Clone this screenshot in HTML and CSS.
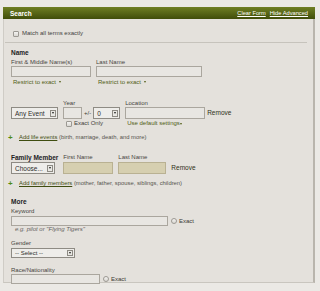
FILE: index.html
```html
<!DOCTYPE html>
<html lang="en">
<head>
  <meta charset="UTF-8">
  <title>Search</title>
  <link rel="stylesheet" href="styles.css">
</head>
<body>
  <section class="search">
    <div class="search_head">
      <h2>Search</h2>
      <div class="head_links"><a href="#">Clear Form</a><a href="#">Hide Advanced</a></div>
    </div>
    <div class="search_body">
      <div class="match"><span class="chk"></span>Match all terms exactly</div>

      <h3 class="heading name_head">Name</h3>
      <div class="row">
        <div class="col">
          <span class="lbl">First &amp; Middle Name(s)</span>
          <span class="input w80"></span>
          <a class="restrict" href="#">Restrict to exact <i class="caret"></i></a>
        </div>
        <div class="col">
          <span class="lbl">Last Name</span>
          <span class="input w106"></span>
          <a class="restrict" href="#">Restrict to exact <i class="caret"></i></a>
        </div>
      </div>

      <div class="row event_row">
        <div class="col">
          <span class="lbl">&nbsp;</span>
          <span class="select w47">Any Event<b class="drop"><i></i></b></span>
        </div>
        <div class="col year_col">
          <span class="lbl">Year</span>
          <span class="input w19 h12"></span>
          <span class="sub exact_only"><span class="chk"></span>Exact Only</span>
        </div>
        <div class="col">
          <span class="lbl">&nbsp;</span>
          <span class="pm">+/-</span>
        </div>
        <div class="col">
          <span class="lbl">&nbsp;</span>
          <span class="select w27">0<b class="drop"><i></i></b></span>
        </div>
        <div class="col loc_col">
          <span class="lbl">Location</span>
          <span class="input w80 h12"></span>
          <a class="sub restrict" href="#">Use default settings<i class="caret"></i></a>
        </div>
        <div class="col">
          <span class="lbl">&nbsp;</span>
          <span class="remove">Remove</span>
        </div>
      </div>

      <p class="add add_life"><span class="plus">+</span><a href="#">Add life events</a> (birth, marriage, death, and more)</p>

      <div class="row family_row">
        <div class="col">
          <h3 class="heading">Family Member</h3>
          <span class="select w44">Choose...<b class="drop"><i></i></b></span>
        </div>
        <div class="col">
          <span class="lbl">First Name</span>
          <span class="input tan w50"></span>
        </div>
        <div class="col">
          <span class="lbl">Last Name</span>
          <span class="input tan w48"></span>
        </div>
        <div class="col">
          <span class="lbl">&nbsp;</span>
          <span class="remove">Remove</span>
        </div>
      </div>

      <p class="add add_family"><span class="plus">+</span><a href="#">Add family members</a> (mother, father, spouse, siblings, children)</p>

      <h3 class="heading more_head">More</h3>
      <span class="lbl kw_lbl">Keyword</span>
      <div class="line">
        <span class="input w157 h10"></span><span class="chk round"></span><span class="exact">Exact</span>
      </div>
      <p class="hint">e.g. pilot or "Flying Tigers"</p>

      <span class="lbl gender_lbl">Gender</span>
      <span class="select w64 h10">-- Select --<b class="drop"><i></i></b></span>

      <span class="lbl race_lbl">Race/Nationality</span>
      <div class="line">
        <span class="input w89 h10"></span><span class="chk round"></span><span class="exact">Exact</span>
      </div>
    </div>
  </section>
</body>
</html>
```

FILE: styles.css
```css
html, body{  margin: 0;  padding: 0;  }
body{
  background: #ebe9e5;
  font-family: "Liberation Sans", Arial, sans-serif;  font-size: 6px;  color: #43413c;
  width: 320px;  height: 291px;  overflow: hidden;
}
h2, h3, p{  margin: 0;  padding: 0;  }
a{  color: inherit;  }

.search{  margin: 7px 5px 0 3px;  }

.search_head{
  height: 12px;  padding: 0 7px;  display: flex;  align-items: center;  justify-content: space-between;
  background: linear-gradient(#6f7f24, #404d0a);
}
.search_head h2{  font-size: 6.5px;  color: #fff;  font-weight: bold;  }
.head_links{  display: flex;  gap: 4px;  font-size: 5.7px;  }
.head_links a{  color: #fff;  }

.search_body{
  background: #e4e1dc;  border-left: 1px solid #cfccc6;  border-right: 2px solid #b9b5ad;  border-bottom: 1px solid #c9c6bf;
  padding: 0 6px 5px 7px;  height: 264px;  box-sizing: border-box;
}

.match{
  margin: 0 0 0 -6px;  padding: 11px 0 5px 8px;  line-height: 7px;  width: 302px;  box-sizing: border-box;
  border-bottom: 1px solid #c6c3bc;  display: flex;  align-items: center;  gap: 3px;
}

.chk{
  display: inline-block;  width: 4px;  height: 4px;  border: 1px solid #9c9993;  border-radius: 1px;
  background: linear-gradient(#f4f3f1, #d9d7d2);
}
.chk.round{  border-radius: 50%;  }

.heading{  font-size: 6.5px;  line-height: 7px;  color: #22211e;  font-weight: bold;  }
.name_head{  margin-top: 6px;  }

.row{  display: flex;  align-items: flex-start;  }
.col{  display: flex;  flex-direction: column;  align-items: flex-start;  white-space: nowrap;  flex-shrink: 0;  }
.year_col{  width: 19px;  }
.loc_col{  width: 80px;  }
.lbl{  display: block;  line-height: 7px;  color: #46443e;  }

.row:not(.event_row):not(.family_row){  margin-top: 3px;  gap: 5px;  }

.input{
  display: block;  height: 11px;  box-sizing: border-box;  border: 1px solid #aaa69e;  background: #e8e6e2;
}
.input.tan{  background: #d6cfb0;  border-color: #b9b192;  height: 12px;  }
.h12{  height: 12px;  }
.h10{  height: 10px;  }
.w19{  width: 19px;  }
.w48{  width: 48px;  }
.w50{  width: 50px;  }
.w80{  width: 80px;  }
.w89{  width: 89px;  }
.w106{  width: 106px;  }
.w157{  width: 157px;  }

.select{
  display: flex;  align-items: center;  justify-content: space-between;  height: 12px;  box-sizing: border-box;
  border: 1px solid #8e8b84;  background: #eeedea;  padding: 0 1px 0 3px;  color: #2e2d2a;  font-size: 6.5px;
}
.select.h10{  height: 10px;  font-size: 6px;  }
.w27{  width: 27px;  }
.w44{  width: 44px;  }
.w47{  width: 47px;  }
.w64{  width: 64px;  }
.drop{
  width: 6px;  height: 7px;  box-sizing: border-box;  border: 1px solid #8e8b84;  background: #e9e8e4;
  display: flex;  align-items: center;  justify-content: center;
}
.h10 .drop{  height: 6px;  }
.drop i{  border-left: 1.5px solid transparent;  border-right: 1.5px solid transparent;  border-top: 2px solid #1d1c1a;  }

.restrict{  color: #515d14;  text-decoration: none;  line-height: 7px;  margin: 2px 0 0 2px;  }
.caret{
  display: inline-block;  vertical-align: middle;  margin-left: 1px;
  border-left: 1.5px solid transparent;  border-right: 1.5px solid transparent;  border-top: 2px solid #515d14;
}

.event_row{  margin-top: 14px;  }
.event_row .col:nth-child(2){  margin-left: 5px;  }
.event_row .col:nth-child(3){  margin-left: 2px;  }
.event_row .col:nth-child(4){  margin-left: 2px;  }
.event_row .col:nth-child(5){  margin-left: 5px;  }
.event_row .col:nth-child(6){  margin-left: 2px;  }
.pm, .remove{  line-height: 12px;  color: #3a3934;  }
.remove{  color: #2f3116;  font-size: 6.5px;  }
.sub{  line-height: 7px;  margin: 1px 0 0 3px;  display: flex;  align-items: center;  gap: 2px;  }
.sub.restrict{  margin-left: 2px;  gap: 0;  }
.sub .caret{  margin-left: 0;  }

.add{  line-height: 7px;  color: #55534d;  display: flex;  align-items: center;  white-space: pre;  font-size: 5.85px;  }
.add a{  color: #3f4d10;  }
.plus{  color: #4f8a12;  font-weight: bold;  font-size: 8px;  width: 11px;  margin-left: -3px;  }
.add_life{  margin-top: 7px;  }
.add_family{  margin-top: 6px;  }

.family_row{  margin-top: 13px;  }
.family_row .col:nth-child(2){  margin-left: 5px;  }
.family_row .col:nth-child(3){  margin-left: 5px;  }
.family_row .col:nth-child(4){  margin-left: 5px;  }
.family_row .heading{  margin-bottom: 1px;  }
.family_row .lbl{  margin-bottom: 1px;  }

.more_head{  margin-top: 11px;  }
.kw_lbl{  margin-top: 3px;  }
.line{  display: flex;  align-items: center;  margin-top: 1px;  }
.line .chk{  margin-left: 3px;  }
.exact{  margin-left: 2px;  color: #3a3934;  }
.hint{  line-height: 7px;  font-style: italic;  color: #64625c;  padding-left: 4px;  }
.gender_lbl{  margin-top: 7px;  }
.gender_lbl + .select{  margin-top: 1px;  }
.race_lbl{  margin-top: 9px;  }
.race_lbl + .line{  margin-top: 0;  }
```
